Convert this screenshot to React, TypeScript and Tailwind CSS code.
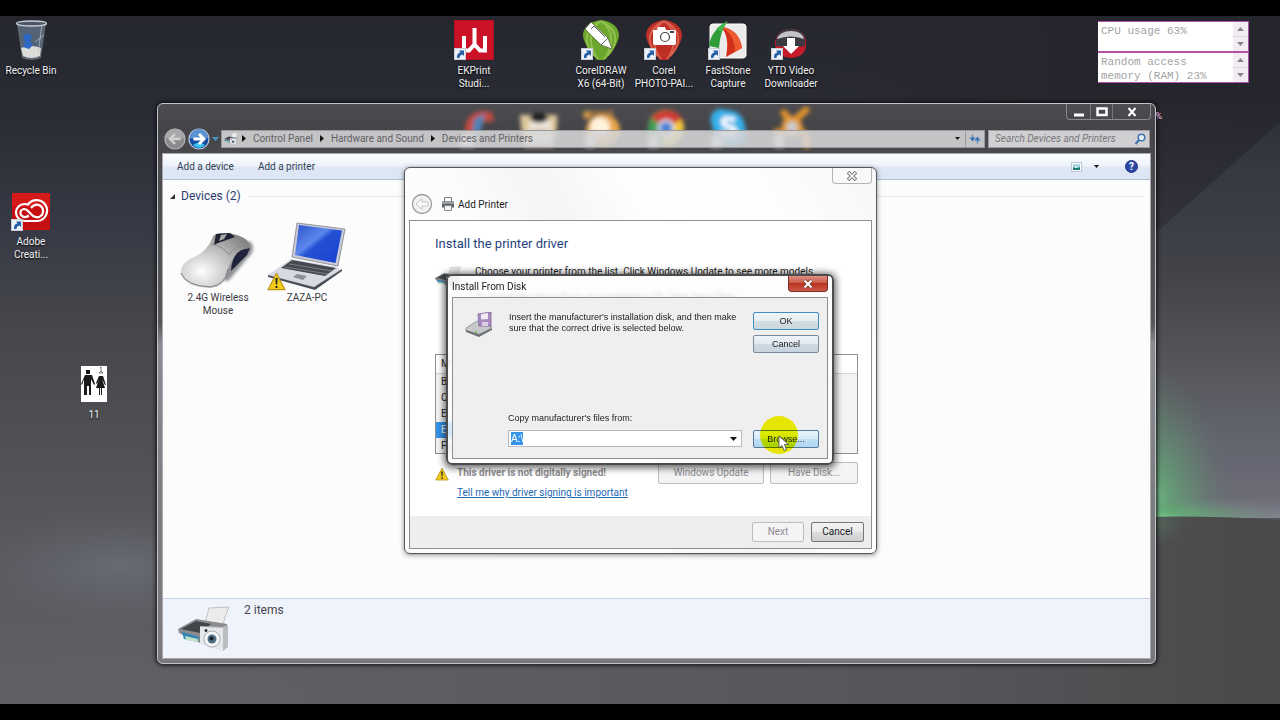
import type { ReactNode } from "react";

const ui = "font-['Roboto','Noto_Sans',sans-serif]";

function Wallpaper() {
  return (
    <svg className="absolute inset-0 h-full w-full" viewBox="0 0 1280 688" preserveAspectRatio="none" aria-hidden="true">
      <defs>
        <linearGradient id="sky" x1="0" y1="0" x2="0" y2="1">
          <stop offset="0" stopColor="#25262e" />
          <stop offset="0.15" stopColor="#2b2d36" />
          <stop offset="0.32" stopColor="#383b45" />
          <stop offset="0.45" stopColor="#46474b" />
          <stop offset="0.65" stopColor="#525256" />
          <stop offset="0.8" stopColor="#595a60" />
          <stop offset="1" stopColor="#606166" />
        </linearGradient>
        <linearGradient id="beam" x1="0" y1="0" x2="0" y2="1">
          <stop offset="0" stopColor="#2d3038" />
          <stop offset="0.1" stopColor="#343841" />
          <stop offset="0.28" stopColor="#3c3f48" />
          <stop offset="0.38" stopColor="#434347" />
          <stop offset="0.62" stopColor="#57575b" />
          <stop offset="0.8" stopColor="#62646e" />
          <stop offset="0.95" stopColor="#6c6c77" />
          <stop offset="1" stopColor="#83838f" />
        </linearGradient>
        <linearGradient id="right" x1="0" y1="0" x2="1" y2="0">
          <stop offset="0" stopColor="#26262e" stopOpacity="0" />
          <stop offset="0.6" stopColor="#26262e" />
          <stop offset="1" stopColor="#24252d" />
        </linearGradient>
        <linearGradient id="shade" x1="0" y1="0" x2="0" y2="1">
          <stop offset="0" stopColor="#34343c" stopOpacity="0" />
          <stop offset="1" stopColor="#34343c" />
        </linearGradient>
        <linearGradient id="ground" x1="0" y1="0" x2="1" y2="0">
          <stop offset="0" stopColor="#606166" stopOpacity="0" />
          <stop offset="0.3" stopColor="#5d5e63" />
          <stop offset="0.75" stopColor="#555459" />
          <stop offset="1" stopColor="#494949" />
        </linearGradient>
        <radialGradient id="green">
          <stop offset="0" stopColor="#8fe5a4" />
          <stop offset="0.3" stopColor="#63b077" stopOpacity="0.75" />
          <stop offset="1" stopColor="#5f8a6a" stopOpacity="0" />
        </radialGradient>
        <radialGradient id="haze">
          <stop offset="0" stopColor="#7c808a" stopOpacity="0.45" />
          <stop offset="1" stopColor="#6a6c72" stopOpacity="0" />
        </radialGradient>
        <clipPath id="above"><rect x="0" y="0" width="1280" height="502" /></clipPath>
      </defs>
      <rect width="1280" height="688" fill="url(#sky)" />
      <rect x="700" width="580" height="300" fill="url(#right)" />
      <rect x="1100" y="80" width="180" height="150" fill="url(#shade)" />
      <path d="M1280 106 L1150 222 V502 H1280Z" fill="url(#beam)" />
      <g clipPath="url(#above)">
        <ellipse cx="1145" cy="500" rx="85" ry="150" fill="url(#green)" />
        <ellipse cx="1140" cy="502" rx="150" ry="22" fill="url(#green)" />
      </g>
      <ellipse cx="120" cy="550" rx="150" ry="60" fill="url(#haze)" />
      <path d="M0 688 V640 H1100 V502 Q1200 498 1280 504 V688Z" fill="url(#ground)" />
      <ellipse cx="1150" cy="505" rx="40" ry="28" fill="url(#green)" opacity="0.25" />
    </svg>
  );
}

function Shortcut() {
  return (
    <g>
      <rect x="0.5" y="28.500" width="11" height="11" fill="#eef2f8" stroke="#c8ccd4" />
      <path d="M3 38 Q2.500 33 6.500 32.500 L5 30.500 H10 V36 L8.500 34.500 Q5.500 35 5.500 38Z" fill="#2560a8" />
    </g>
  );
}

function DesktopIcon({ place, lines, children }: { place: string; lines: string[]; children: ReactNode }) {
  return (
    <button type="button" className={`absolute flex w-20 flex-col items-center ${place}`}>
      <svg width="40" height="40" viewBox="0 0 40 40" aria-hidden="true">{children}</svg>
      <span className="mt-1 text-[10px] leading-[13px] text-[#f2f2f4] [text-shadow:0_1px_2px_#000]">
        {lines.map((l) => (
          <span key={l} className="block whitespace-nowrap">{l}</span>
        ))}
      </span>
    </button>
  );
}

function DesktopIcons() {
  return (
    <>
      <DesktopIcon place="left-[-9px] top-1" lines={["Recycle Bin"]}>
        <path d="M6 3 L11 38 Q20 42 30 38 L35 3Z" fill="#8792a0" opacity="0.6" />
        <path d="M8 6 L12 34 Q20 38 29 34 L33 6Z" fill="#4e6078" opacity="0.6" />
        <path d="M10 28 Q20 24 30 28 L29 36 Q20 40 12 36Z" fill="#dcdcd8" />
        <path d="M12 16 l5 -3 l4 4 l-2 4 l3 4 l-4 4 l-6 -2 l2 -4z" fill="#2c68c4" />
        <path d="M33 15 L24 22 M31 4 L27 34" stroke="#b9c4d0" strokeWidth="1" fill="none" opacity="0.7" />
        <ellipse cx="20.500" cy="3.500" rx="15" ry="2.500" fill="#4d5664" stroke="#c9d0d8" strokeWidth="1.300" />
      </DesktopIcon>
      <DesktopIcon place="left-[434px] top-1" lines={["EKPrint", "Studi..."]}>
        <rect width="40" height="40" fill="#cc1226" stroke="#9c0c1a" />
        <path d="M20.500 8 V25 M10 16 V30.500 H15 L20.500 24.500 L26 30.500 H31 V16" fill="none" stroke="#fff" strokeWidth="4" />
        <Shortcut />
      </DesktopIcon>
      <DesktopIcon place="left-[561px] top-1" lines={["CorelDRAW", "X6 (64-Bit)"]}>
        <path d="M20 0.500 C33 0.500 41 11 37 20 C34 29 30 32 25 39 Q20 42 15 39 C10 32 6 29 3 20 C-1 11 7 0.500 20 0.500Z" fill="#6ca62c" />
        <path d="M20 1 C4 12 10 30 17 39 M20 1 C36 12 30 30 23 39 M20 1 C-2 12 6 28 14 36 M20 1 C42 12 34 28 26 36" stroke="#8fc04e" strokeWidth="2" fill="none" />
        <path d="M4 9 L10 2 L27 18 L31 29 L20 25Z" fill="#fff" stroke="#4a5a30" strokeWidth="0.700" />
        <path d="M10 9 L13 6 L24 17 M20 25 L27 18" stroke="#667" strokeWidth="1" fill="none" />
        <Shortcut />
      </DesktopIcon>
      <DesktopIcon place="left-[624px] top-1" lines={["Corel", "PHOTO-PAI..."]}>
        <path d="M20 0.500 C33 0.500 41 11 37 20 C34 29 30 32 25 39 Q20 42 15 39 C10 32 6 29 3 20 C-1 11 7 0.500 20 0.500Z" fill="#bd2f25" />
        <path d="M20 1 C4 12 10 30 17 39 M20 1 C36 12 30 30 23 39 M20 1 C-2 12 6 28 14 36 M20 1 C42 12 34 28 26 36" stroke="#d8604e" strokeWidth="2" fill="none" />
        <path d="M9 10 H13 L14 7 H21 L22 10 H30 Q32 10 32 12 V23 Q32 25 30 25 H11 Q9 25 9 23Z" fill="#fff" />
        <circle cx="21" cy="17" r="4.500" fill="#fff" stroke="#444" strokeWidth="1.200" />
        <rect x="26" y="11" width="4" height="2" fill="#444" />
        <Shortcut />
      </DesktopIcon>
      <DesktopIcon place="left-[688px] top-1" lines={["FastStone", "Capture"]}>
        <rect x="2" y="4" width="36" height="34" rx="3" fill="#eceaea" stroke="#fff" />
        <path d="M19 1 Q12 12 11 28 L1 26 Q2 12 19 1Z" fill="#2f9e3a" />
        <path d="M13 7 Q22 16 18 37 L34 28 Q30 8 13 7Z" fill="#d3301c" />
        <path d="M13 7 Q32 10 34 28 L27 32 Q27 14 13 7Z" fill="#ee5a30" />
        <path d="M8 9 Q14 4 20 1 Q15 8 14 12Z" fill="#41b54a" />
        <Shortcut />
      </DesktopIcon>
      <DesktopIcon place="left-[751px] top-1" lines={["YTD Video", "Downloader"]}>
        <path d="M4 22 Q6 9 20 9 Q34 9 35 22 Q36 37 20 38 Q4 37 4 22Z" fill="#c41a2a" />
        <path d="M5 20 Q7 9 20 9 Q33 9 34 20 Q34 26 34 26 Q20 28 5 26Z" fill="#3a3a40" />
        <path d="M6 19 Q9 11 20 11 Q31 11 33 19 Q20 14 6 19Z" fill="#c3c3c8" />
        <path d="M16 18 H24 V26 H28 L20 34 L12 26 H16Z" fill="#fff" />
        <Shortcut />
      </DesktopIcon>
      <DesktopIcon place="left-[-9px] top-[175px]" lines={["Adobe", "Creati..."]}>
        <rect x="1" y="2" width="38" height="37" fill="#c60f12" />
        <rect x="1" y="2" width="38" height="14" fill="#d61a1a" />
        <path d="M13.500 30 A8.500 8.500 0 0 1 13.500 13 Q15.500 13 17 13.500 A10.500 10.500 0 1 1 27 30Z" fill="none" stroke="#fff" strokeWidth="2.200" />
        <path d="M18 24.500 Q13 28 10 24 Q8 19 13 18 Q15 18 17 20 L22 25 Q27 28 31 24 Q34 18 29 14.500 Q24 12 20 17" fill="none" stroke="#fff" strokeWidth="2.200" />
        <Shortcut />
      </DesktopIcon>
      <DesktopIcon place="left-[54px] top-[348px]" lines={["11"]}>
        <rect x="7" y="2" width="26" height="36" fill="#fff" />
        <path d="M12 6 h4 v4 h-4z M11 11 h7 l3 9 l-1 1 l-3 -6 l0 16 h-2 v-9 h-2 v9 h-3 V15 l-2 6 l-1 -1z" fill="#1a1a1a" />
        <path d="M25 12 h4 l3 9 l-1 0 l-3 -6 l3 9 h-3 v7 h-1 v-7 h-1 v7 h-1 v-7 h-3 l3 -9 l-2 5 l-1 -1z" fill="#1a1a1a" />
        <path d="M26 4 l1 -1 v4 M25 9 h4 l-2 -2z" fill="none" stroke="#555" strokeWidth="0.800" />
      </DesktopIcon>
    </>
  );
}

function Gadget({ children }: { children: ReactNode }) {
  return (
    <div className="flex h-[31px] border border-l-0 border-[#b352a4] bg-white">
      <p className="flex-1 overflow-hidden pl-[3px] pt-[2px] font-['Liberation_Mono',monospace] text-[11px] leading-[14px] text-[#a3a3a3]">{children}</p>
      <div className="flex w-[15px] flex-col gap-px bg-[#ddd3dd]">
        <button type="button" aria-label="Scroll up" className="flex flex-1 items-center justify-center bg-[#f1edf2]">
          <svg width="7" height="4" viewBox="0 0 7 4"><path d="M0 4 L3.500 0 L7 4Z" fill="#8a868c" /></svg>
        </button>
        <button type="button" aria-label="Scroll down" className="flex flex-1 items-center justify-center bg-[#f1edf2]">
          <svg width="7" height="4" viewBox="0 0 7 4"><path d="M0 0 L3.500 4 L7 0Z" fill="#8a868c" /></svg>
        </button>
      </div>
    </div>
  );
}

function BehindGlass() {
  return (
    <svg className="absolute left-[300px] top-0" width="370" height="50" viewBox="457 103 370 50" aria-hidden="true">
      <defs>
        <filter id="soft"><feGaussianBlur stdDeviation="2" /></filter>
      </defs>
      <g filter="url(#soft)">
        <path d="M464 135 Q462 112 482 110 Q495 110 492 121 Q481 118 477 128 L474 142Z" fill="#c84c42" />
        <path d="M473 118 L484 112 L480 130 L470 143Z" fill="#4e83b4" />
        <path d="M459 134 h14 v12 h-14z" fill="#dbe4ee" />
        <path d="M519 114 H556 V126 L552 146 H524 L520 126Z" fill="#dcc79a" />
        <path d="M528 120 H550 V142 H528Z" fill="#f1e9dd" />
        <ellipse cx="538" cy="117" rx="9" ry="5" fill="#222" />
        <path d="M530 129 H548" stroke="#b98a7a" strokeWidth="2" />
        <ellipse cx="602" cy="129" rx="17" ry="16" fill="#e8a548" />
        <ellipse cx="599" cy="126" rx="10" ry="10" fill="#fff3dc" />
        <circle cx="586" cy="114" r="4" fill="#d59a4a" />
        <path d="M590 112 H614" stroke="#b07a3c" strokeWidth="5" strokeDasharray="4 2" />
        <circle cx="665" cy="127" r="18" fill="#f2c63c" />
        <path d="M665 127 L650 118 A18 18 0 0 1 681 118Z" fill="#d23a36" />
        <path d="M665 127 L650 117 A18 18 0 0 0 662 145Z" fill="#3f9c52" />
        <circle cx="665" cy="127" r="7.500" fill="#4c83d6" stroke="#f0f0f0" strokeWidth="2" />
        <path d="M711 113 Q716 106 724 109 Q742 109 744 126 Q748 140 738 144 Q714 148 712 128 Q708 118 711 113Z" fill="#36b1ea" />
        <path d="M734 119 Q722 115 722 121 Q723 125 729 126 Q736 128 733 132 Q726 136 720 131" fill="none" stroke="#fff" strokeWidth="4.500" />
        <path d="M783 112 Q787 119 794 119 L805 109 M806 144 Q806 132 798 129 M776 131 Q786 133 788 125" fill="none" stroke="#e0922c" strokeWidth="7" strokeLinecap="round" />
        <circle cx="791" cy="126" r="8" fill="#c9ccce" stroke="#e29a38" strokeWidth="5" />
        <path d="M584 135 h10 v11 h-10z M647 135 h10 v11 h-10z M710 135 h11 v11 h-11z M773 135 h10 v11 h-10z" fill="#dfe5ee" />
      </g>
    </svg>
  );
}

function PrinterPhoto({ size, className = "" }: { size: number; className?: string }) {
  return (
    <svg width={size} height={size} viewBox="0 0 52 48" className={className} aria-hidden="true">
      <path d="M31 3 L51 2 Q47 10 45 20 L27 18Z" fill="#ececec" stroke="#b5b5b5" strokeWidth="0.800" />
      <path d="M0 24 L18 14 L49 19 V26 L22 38 L1 28Z" fill="#8a8c90" />
      <path d="M3 24 L18 16 L33 19 L22 28Z" fill="#42464a" />
      <path d="M4 27 L21 32 L20 37 L6 34Z" fill="#2f86b8" />
      <path d="M7 31 L20 34 V37 L8 35Z" fill="#bfe3c2" />
      <path d="M22 21 L44 22 L50 20 V42 L45 46 L22 38Z" fill="#b9bbbf" />
      <path d="M22 22 L45 23 V46 L22 38Z" fill="#e6e7ea" />
      <circle cx="34" cy="34" r="8" fill="#f5f6f8" stroke="#a9adb3" />
      <circle cx="34" cy="34" r="4.500" fill="#4f6d85" />
      <circle cx="33.500" cy="33.500" r="2" fill="#15222e" />
      <circle cx="28" cy="25.500" r="1.500" fill="#333" />
    </svg>
  );
}

function Warning({ className = "", size = 14 }: { className?: string; size?: number }) {
  return (
    <svg width={size} height={size} viewBox="0 0 14 14" className={className} aria-hidden="true">
      <path d="M7 1 L13.300 13 H0.700Z" fill="#f4cb1d" stroke="#b89417" strokeWidth="0.800" strokeLinejoin="round" />
      <path d="M6.200 4.500 h1.600 l-0.300 4.800 h-1z M6.300 10.300 h1.400 v1.400 h-1.400z" fill="#222" />
    </svg>
  );
}

function Mouse() {
  return (
    <svg width="76" height="60" viewBox="0 0 76 60" aria-hidden="true">
      <defs>
        <radialGradient id="shell" cx="0.300" cy="0.700" r="0.800">
          <stop offset="0" stopColor="#fdfdfd" />
          <stop offset="0.5" stopColor="#c4c4c4" />
          <stop offset="1" stopColor="#868686" />
        </radialGradient>
        <filter id="drop"><feGaussianBlur stdDeviation="1.500" /></filter>
      </defs>
      <path d="M62 10 Q76 8 72 22 L50 48 Q44 54 42 44Z" fill="#4a4a52" opacity="0.6" filter="url(#drop)" />
      <path d="M70 17 Q52 18 51 40 L67 24Z" fill="#20233c" />
      <path d="M36 3 Q50 0 64 7 Q71 12 70 17 Q52 18 48 38 Q46 56 30 57 Q4 56 1 42 Q0 34 10 28 Q26 22 32 8 Q33 4 36 3Z" fill="url(#shell)" />
      <path d="M31 13 Q42 14 49 24 Q54 14 69 14" fill="none" stroke="#8d8d8d" strokeWidth="1" />
      <path d="M36 3 L50 2 L55 6 L38 12 L34 14Z" fill="#202336" />
      <path d="M41 4 L47 3 L44 8 L39 10Z" fill="#aaa" />
      <path d="M1 42 Q6 55 30 56 Q46 54 48 38" fill="none" stroke="#7b7b7b" strokeWidth="1" />
    </svg>
  );
}

function Laptop() {
  return (
    <svg width="78" height="70" viewBox="0 0 78 70" aria-hidden="true">
      <defs>
        <linearGradient id="screen" x1="0" y1="0" x2="1" y2="1">
          <stop offset="0" stopColor="#2a52cc" />
          <stop offset="0.4" stopColor="#5d87ec" />
          <stop offset="0.5" stopColor="#2450d4" />
          <stop offset="1" stopColor="#1a41cf" />
        </linearGradient>
      </defs>
      <path d="M29 2 L77 8 L70 45 L24 36Z" fill="#c9ccd6" stroke="#7d818c" strokeWidth="0.800" />
      <path d="M31 4 L74 9.500 L67.500 42 L27 34Z" fill="url(#screen)" />
      <path d="M23 38 L70 46 L72 50 L46 66 L0 54Z" fill="#d7dae0" />
      <path d="M24 39 L68 47 L57 55 L13 47Z" fill="#45484f" />
      <path d="M17 46 L60 53 M21 43 L64 50" stroke="#8a8d94" strokeWidth="0.800" />
      <path d="M29 53 L39 55 L35 59 L25 56Z" fill="#8c8f97" />
      <path d="M0 54 L46 66 L74 48 V50 L47 69 L0 56Z" fill="#4c505a" />
    </svg>
  );
}

function Crumb({ children }: { children: ReactNode }) {
  return (
    <>
      <svg width="4" height="7" viewBox="0 0 4 7" className="mr-[7px] shrink-0" aria-hidden="true"><path d="M0 0 L4 3.500 L0 7Z" fill="#111" /></svg>
      <a href="#path" className="mr-[7px] whitespace-nowrap">{children}</a>
    </>
  );
}

function ExplorerWindow() {
  return (
    <section aria-label="Devices and Printers" className="absolute bottom-[40px] left-[157px] right-[124px] top-[87px] flex flex-col rounded-md border border-[#c3c4c8] bg-[linear-gradient(180deg,#4d4c50_0px,#454448_24px,#4b4a4e_60px,#57575b_220px,#8b8c93_240px,#7b7b80_420px,#78787d_100%)] px-1 pb-1 shadow-[0_0_4px_1px_#0d0d10]">
      <BehindGlass />
      <div className="flex h-[23px] shrink-0 justify-end">
        <div className="flex h-4 divide-x divide-[#77777b] rounded-b border border-t-0 border-[#8a8a8e]">
          <button type="button" aria-label="Minimize" className="flex w-6 items-center justify-center">
            <svg width="12" height="12" viewBox="0 0 12 12"><path d="M1 9 H11" stroke="#fff" strokeWidth="3" /></svg>
          </button>
          <button type="button" aria-label="Maximize" className="flex w-[22px] items-center justify-center">
            <svg width="12" height="10" viewBox="0 0 12 10"><rect x="1.500" y="1.500" width="9" height="6.500" fill="none" stroke="#fff" strokeWidth="2.500" /></svg>
          </button>
          <button type="button" aria-label="Close" className="flex w-[37px] items-center justify-center">
            <svg width="10" height="10" viewBox="0 0 10 10"><path d="M1.500 1 L8.500 9 M8.500 1 L1.500 9" stroke="#fff" strokeWidth="2.200" /></svg>
          </button>
        </div>
      </div>
      <div className="relative mb-[3px] flex h-[23px] shrink-0 items-center pl-[2px] pr-px">
        <button type="button" aria-label="Back" className="mr-[2px]">
          <svg width="22" height="22" viewBox="0 0 22 22">
            <circle cx="11" cy="11" r="10" fill="#8b8b8d" stroke="#b5b5b7" strokeWidth="1.200" />
            <path d="M2 10 A9 9 0 0 1 20 10 Q11 13 2 10Z" fill="#a9a9ab" />
            <path d="M16.500 11 H6.500 M11 6 L6 11 L11 16" stroke="#d2d2d4" strokeWidth="2.400" fill="none" />
          </svg>
        </button>
        <button type="button" aria-label="Forward">
          <svg width="22" height="22" viewBox="0 0 22 22">
            <circle cx="11" cy="11" r="10" fill="#164f9e" stroke="#b9cbe0" strokeWidth="1.200" />
            <path d="M2 10 A9 9 0 0 1 20 10 Q11 13 2 10Z" fill="#5d93d3" />
            <path d="M5 17 Q11 12 17 17 Q11 23 5 17Z" fill="#3cc4f0" />
            <path d="M5.500 11 H15.500 M11 6 L16 11 L11 16" stroke="#fff" strokeWidth="2.800" fill="none" />
          </svg>
        </button>
        <button type="button" aria-label="Recent pages" className="mx-[2px]">
          <svg width="7" height="4" viewBox="0 0 7 4"><path d="M0 0 H7 L3.500 4Z" fill="#4a97cc" /></svg>
        </button>
        <div className="flex h-[18px] min-w-0 flex-1 items-center border border-[#9a9a9c] bg-[rgba(214,214,215,0.88)] text-[10px] text-[#626265]">
          <PrinterPhoto size={14} className="ml-[2px] mr-1 shrink-0" />
          <Crumb>Control Panel</Crumb>
          <Crumb>Hardware and Sound</Crumb>
          <Crumb>Devices and Printers</Crumb>
          <button type="button" aria-label="Previous locations" className="ml-auto flex w-4 justify-center">
            <svg width="5" height="3" viewBox="0 0 5 3"><path d="M0 0 H5 L2.500 3Z" fill="#111" /></svg>
          </button>
          <button type="button" aria-label="Refresh" className="flex h-full w-[19px] items-center justify-center border-l border-[#9a9a9c]">
            <svg width="12" height="12" viewBox="0 0 12 12"><path d="M3.500 2 V6 M1.500 5 L3.500 7.500 L5.500 5Z M8.500 10.500 V6 M6.500 7 L8.500 4.500 L10.500 7Z" stroke="#3d78b5" strokeWidth="1.100" fill="#3d78b5" /></svg>
          </button>
        </div>
        <label className="ml-[3px] flex h-[18px] w-[162px] shrink-0 items-center border border-[#9a9a9c] bg-[#d0d0d2]">
          <input aria-label="Search Devices and Printers" placeholder="Search Devices and Printers" className="min-w-0 flex-1 bg-transparent pl-[6px] text-[10px] italic text-[#555] outline-none placeholder:text-[#77777a]" />
          <svg width="12" height="12" viewBox="0 0 12 12" className="mr-[3px] shrink-0"><circle cx="7.500" cy="4.500" r="3.300" fill="#e6eef8" stroke="#3f74b0" strokeWidth="1.500" /><path d="M5 7 L1.500 11" stroke="#3f74b0" strokeWidth="2" /></svg>
        </label>
      </div>
      <div className="flex min-h-0 flex-1 flex-col border border-[#a9a9ad] bg-[#fcfcfd]">
        <div className="flex h-[26px] shrink-0 items-center gap-6 border-b border-[#aebed3] bg-[linear-gradient(180deg,#fbfdff_0%,#eef3fb_45%,#dfe7f5_55%,#dbe5f4_100%)] pl-[14px] pr-3 text-[10px] text-[#323e56]">
          <button type="button">Add a device</button>
          <button type="button">Add a printer</button>
          <div className="ml-auto flex items-center">
            <button type="button" aria-label="View" className="mr-3">
              <svg width="11" height="10" viewBox="0 0 11 10"><rect x="0.500" y="0.500" width="10" height="9" fill="#fff" stroke="#b9c6d2" /><rect x="2" y="2" width="7" height="3" fill="#a8d8e8" /><path d="M2 8 V5 L5 6 L9 5 V8Z" fill="#1f7a74" /></svg>
            </button>
            <button type="button" aria-label="View options" className="mr-[26px]">
              <svg width="5" height="3" viewBox="0 0 5 3"><path d="M0 0 H5 L2.500 3Z" fill="#111" /></svg>
            </button>
            <button type="button" aria-label="Help" className="flex h-[13px] w-[13px] items-center justify-center rounded-full border border-[#20357c] bg-[#2a48a4] text-[10px] font-bold leading-none text-white">?</button>
          </div>
        </div>
        <div className="min-h-0 flex-1 pl-[7px] pr-[6px] pt-[7px]">
          <h2 className="flex items-center text-[12px] leading-[18px] text-[#2f3d70]">
            <svg width="5" height="5" viewBox="0 0 5 5" className="mr-[6px]" aria-hidden="true"><path d="M5 0 V5 H0Z" fill="#333" /></svg>
            Devices (2)
            <span className="ml-2 h-px flex-1 bg-[#e4e7ee]" />
          </h2>
          <div className="mt-4 flex text-center text-[10px] leading-[13px] text-[#3a3a3e]">
            <figure className="flex w-[96px] flex-col items-center">
              <span className="flex h-[70px] items-end"><Mouse /></span>
              <figcaption>2.4G Wireless<br />Mouse</figcaption>
            </figure>
            <figure className="flex w-[82px] flex-col items-center">
              <span className="relative flex h-[70px] items-end">
                <Laptop />
                <Warning size={19} className="absolute bottom-0 left-[-1px]" />
              </span>
              <figcaption>ZAZA-PC</figcaption>
            </figure>
          </div>
        </div>
        <footer className="flex h-[60px] shrink-0 items-start border-t border-[#c6d0e2] bg-[#eff3fb] pl-[15px] pt-1 text-[12px] leading-[15px] text-[#47474d]">
          <PrinterPhoto size={52} className="mr-[14px]" />
          2 items
        </footer>
      </div>
    </section>
  );
}

function WizardButton({ children, className, disabled = false }: { children: ReactNode; className: string; disabled?: boolean }) {
  return (
    <button
      type="button"
      disabled={disabled}
      className={`rounded-[2px] border text-[10px] leading-none ${disabled ? "border-[#bdbdbf] bg-[#f4f4f4] text-[#8d8d90]" : "border-[#77777a] bg-[linear-gradient(180deg,#f2f2f2_0%,#ebebeb_50%,#dddddd_51%,#cfcfcf_100%)] text-[#1c1c1e]"} ${className}`}
    >
      {children}
    </button>
  );
}

function AddPrinterWizard() {
  return (
    <section aria-label="Add Printer" className="absolute left-[404px] top-[151px] flex h-[387px] w-[473px] flex-col rounded-md border border-[#55565a] bg-[linear-gradient(60deg,#fbfbfb_0%,#fdfdfd_35%,#f5f5f6_50%,#ffffff_65%,#fefefe_80%,#f7f7f7_100%)] px-1 pb-1 shadow-[0_1px_5px_rgba(0,0,0,0.45)]">
      <div className="flex h-4 shrink-0 justify-end">
        <button type="button" aria-label="Close wizard" className="flex w-10 items-center justify-center rounded-b border border-t-0 border-[#b4b4b6]">
          <svg width="12" height="10" viewBox="0 0 12 10"><path d="M2 1 L10 9 M10 1 L2 9" stroke="#6b6b6e" strokeWidth="3.400" /><path d="M2.500 1.500 L9.500 8.500 M9.500 1.500 L2.500 8.500" stroke="#fff" strokeWidth="1.700" /></svg>
        </button>
      </div>
      <div className="flex h-9 shrink-0 items-center pl-[2px] pt-1 text-[10px] text-[#222]">
        <button type="button" aria-label="Previous step" className="mr-2">
          <svg width="22" height="22" viewBox="0 0 22 22"><circle cx="11" cy="11" r="9.500" fill="#f2f2f3" stroke="#9b9b9e" strokeWidth="1.300" /><path d="M5 11 L11 5.500 V9 H17 V13 H11 V16.500Z" fill="#fafafa" stroke="#c4c4c7" /></svg>
        </button>
        <svg width="14" height="14" viewBox="0 0 14 14" className="mr-[3px]" aria-hidden="true">
          <path d="M3.500 0.500 H10.500 V5 H3.500Z" fill="#fff" stroke="#777" /><path d="M1 4.500 H13 V10.500 H1Z" fill="#5b6066" /><path d="M1 4.500 H13 V7 H1Z" fill="#9b9fa5" /><path d="M3.500 8.500 H10.500 V13.500 H3.500Z" fill="#f4f4f4" stroke="#888" />
        </svg>
        Add Printer
      </div>
      <div className="flex min-h-0 flex-1 flex-col border border-[#8f8f92] bg-white">
        <div className="flex-1 pl-[25px] pr-3 pt-[14px] text-[10px] leading-[14px] text-[#222]">
          <h1 className="text-[13px] leading-[18px] text-[#1f3f7c]">Install the printer driver</h1>
          <div className="mt-3 flex h-[89px] gap-[14px]">
            <PrinterPhoto size={26} />
            <div className="whitespace-nowrap">
              <p>Choose your printer from the list. Click Windows Update to see more models.</p>
              <p className="mt-3">To install the driver from an installation CD, click Have Disk.</p>
            </div>
          </div>
          <div className="h-[100px] w-[423px] overflow-hidden border border-[#8f8f92] bg-[#f3f3f3]">
            <table className="w-full text-left">
              <thead>
                <tr className="h-[18px] border-b border-[#d5d5d7] bg-white"><th className="pl-[5px] font-normal leading-4">M</th></tr>
              </thead>
              <tbody>
                {["B", "C", "E", "E", "Fu"].map((maker, i) => (
                  <tr key={i} className="h-4">
                    <td className={`block h-4 w-40 pl-[5px] leading-4 ${i === 3 ? "bg-[#3393ea] text-white" : ""}`}>{maker}</td>
                  </tr>
                ))}
              </tbody>
            </table>
          </div>
          <div className="mt-2 flex w-[423px] items-start">
            <Warning size={14} className="mr-2 mt-[5px]" />
            <div>
              <p className="mt-1 font-bold text-[#8c8c8f]">This driver is not digitally signed!</p>
              <p className="mt-[6px]"><a href="#signing" className="text-[#1d69b4] underline">Tell me why driver signing is important</a></p>
            </div>
            <WizardButton disabled className="ml-auto h-[22px] w-[106px]">Windows Update</WizardButton>
            <WizardButton disabled className="ml-[6px] h-[22px] w-[88px]">Have Disk...</WizardButton>
          </div>
        </div>
        <footer className="flex h-8 shrink-0 items-center justify-end gap-[7px] bg-[#eeeeef] pr-[7px]">
          <WizardButton disabled className="h-5 w-[52px]">Next</WizardButton>
          <WizardButton className="h-5 w-[53px]">Cancel</WizardButton>
        </footer>
      </div>
    </section>
  );
}

function ClassicButton({ children, tone }: { children: ReactNode; tone: string }) {
  return <button type="button" className={`h-[18px] w-[66px] rounded-[2px] border text-[9px] leading-none text-[#222] ${tone}`}>{children}</button>;
}

function InstallFromDisk() {
  return (
    <section aria-label="Install From Disk" className="absolute left-[446px] top-[258px] flex w-[388px] flex-col rounded-md border-2 border-[#4c4c4f] bg-[rgba(252,252,252,0.8)] px-1 pb-1 shadow-[0_1px_7px_2px_rgba(0,0,0,0.6)] backdrop-blur-[2px]">
      <div className="flex h-[21px] justify-between text-[10px] leading-[21px] text-[#1a1a1c]">
        <h2>Install From Disk</h2>
        <button type="button" aria-label="Close dialog" className="flex h-4 w-10 items-center justify-center rounded-b border border-t-0 border-[#7d2a20] bg-[linear-gradient(180deg,#dd8f83_0%,#cd5b4b_45%,#b83220_50%,#d0594a_100%)]">
          <svg width="12" height="10" viewBox="0 0 12 10"><path d="M2.500 1.500 L9.500 8.500 M9.500 1.500 L2.500 8.500" stroke="#6c3a34" strokeWidth="3.400" /><path d="M2.500 1.500 L9.500 8.500 M9.500 1.500 L2.500 8.500" stroke="#fff" strokeWidth="2" /></svg>
        </button>
      </div>
      <div className="flex h-[162px] flex-col justify-between border border-[#8f8f92] bg-[#efeff0] pb-[10px] pl-3 pr-2 pt-[14px] font-['Liberation_Sans',sans-serif] text-[9px] leading-[11px] text-[#222]">
        <div className="flex items-start">
          <svg width="28" height="26" viewBox="0 0 28 26" className="mr-4" aria-hidden="true">
            <path d="M1 16 L12 9 L27 15 L14 24 L1 19Z" fill="#c6c8ca" stroke="#8b8d8f" strokeWidth="0.800" />
            <path d="M1 18 L14 22 L27 16 V18 L14 25 L1 20Z" fill="#6f7376" />
            <path d="M13 2 L26 0 V14 L14 14Z" fill="#a98bc2" stroke="#7d6296" strokeWidth="0.800" />
            <path d="M16 2 L23 1 V7 L16 7.500Z" fill="#f0eaf5" />
            <path d="M17 10 H23 V14 H17Z" fill="#d8cfe0" />
            <circle cx="11" cy="20" r="1" fill="#62c246" />
          </svg>
          <p className="whitespace-nowrap">Insert the manufacturer's installation disk, and then make<br />sure that the correct drive is selected below.</p>
          <div className="ml-auto flex flex-col gap-[5px]">
            <ClassicButton tone="border-[#3c8ec4] bg-[linear-gradient(180deg,#f0f4f6_0%,#e6edf1_50%,#d3dde3_51%,#cbd7de_100%)]">OK</ClassicButton>
            <ClassicButton tone="border-[#7b8a98] bg-[linear-gradient(180deg,#f0f4f7_0%,#e0e9f0_50%,#cfdae3_51%,#c6d3de_100%)]">Cancel</ClassicButton>
          </div>
        </div>
        <div className="flex items-end pl-[43px]">
          <div className="flex w-[234px] flex-col gap-[6px]">
            <label htmlFor="source-path">Copy manufacturer's files from:</label>
            <div className="mb-px flex h-[17px] items-center justify-between border border-[#b6bac0] bg-white px-[2px]">
              <input id="source-path" defaultValue="A:\" className="h-[13px] w-3 bg-[#3594e8] text-[10px] leading-none text-white outline-none" />
              <button type="button" aria-label="Show recent paths" className="pr-[2px]">
                <svg width="7" height="4" viewBox="0 0 7 4"><path d="M0 0 H7 L3.500 4Z" fill="#111" /></svg>
              </button>
            </div>
          </div>
          <div className="ml-auto flex">
            <ClassicButton tone="border-[#54799c] bg-[linear-gradient(180deg,#e9f4fb_0%,#d5ebf8_50%,#bcdff4_51%,#b0d6f0_100%)]">Browse...</ClassicButton>
          </div>
        </div>
      </div>
    </section>
  );
}

export default function App() {
  return (
    <div className={`flex min-h-screen flex-col bg-black ${ui}`}>
      <div className="h-4 shrink-0" />
      <main className="relative flex-1 overflow-hidden">
        <Wallpaper />
        <DesktopIcons />
        <span className="absolute right-[54px] top-[58px] text-[9px] leading-3 text-white">23%</span>
        <aside aria-label="System usage" className="absolute right-[31px] top-[5px] w-[151px]">
          <Gadget>CPU usage 63%</Gadget>
          <Gadget>Random access memory (RAM) 23%</Gadget>
        </aside>
        <ExplorerWindow />
        <span className="absolute right-[118px] top-[94px] text-[9px] leading-3 text-[#f0b8e4]">%</span>
        <AddPrinterWizard />
        <InstallFromDisk />
        <svg className="pointer-events-none absolute left-[759px] top-[399px] mix-blend-multiply" width="40" height="40" viewBox="0 0 40 40" aria-hidden="true">
          <circle cx="20" cy="20" r="19" fill="#f6f600" />
        </svg>
        <svg className="pointer-events-none absolute left-[778px] top-[419px]" width="12" height="17" viewBox="0 0 12 17" aria-hidden="true">
          <path d="M1 1 V13 L4 10.500 L6 15.500 L8.500 14.500 L6.500 9.500 H10.500Z" fill="#fff" stroke="#555" strokeWidth="0.900" />
        </svg>
      </main>
      <div className="h-4 shrink-0" />
    </div>
  );
}
